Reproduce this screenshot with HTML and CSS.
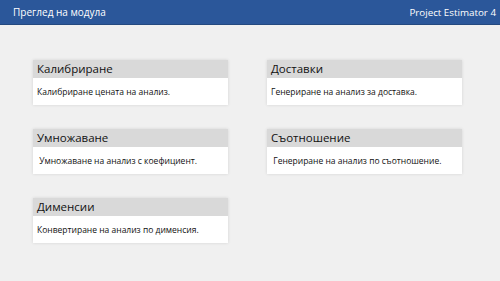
FILE: index.html
```html
<!DOCTYPE html>
<html lang="bg">
<head>
    <meta charset="UTF-8">
    <title>Преглед на модула</title>
    <link rel="stylesheet" href="styles.css">
</head>
<body>
    <div class="topbar">
        <span class="title">Преглед на модула</span>
        <span class="app">Project Estimator 4</span>
    </div>

    <div class="modules">
        <div class="module">
            <div class="module-head">Калибриране</div>
            <div class="module-body">Калибриране цената на анализ.</div>
        </div>
        <div class="module">
            <div class="module-head">Доставки</div>
            <div class="module-body">Генериране на анализ за доставка.</div>
        </div>
        <div class="module">
            <div class="module-head">Умножаване</div>
            <div class="module-body">&nbsp;Умножаване на анализ с коефициент.</div>
        </div>
        <div class="module">
            <div class="module-head">Съотношение</div>
            <div class="module-body">&nbsp;Генериране на анализ по съотношение.</div>
        </div>
        <div class="module">
            <div class="module-head">Дименсии</div>
            <div class="module-body">Конвертиране на анализ по дименсия.</div>
        </div>
    </div>
</body>
</html>
```

FILE: styles.css
```css
body {
    margin: 0;
    width: 500px;
    height: 281px;
    overflow: hidden;
    background-color: #f0f0f0;
    font-family: "Open Sans", "Noto Sans", sans-serif;
}

.topbar {
    height: 24px;
    background-color: #2b579a;
    border-bottom: 1px solid #24497f;
    color: #fff;
    display: flex;
    justify-content: space-between;
    align-items: center;
    padding: 0 4px 0 13px;
    font-size: 9.8px;
}

.title {
    font-size: 10px;
}

.modules {
    display: grid;
    grid-template-columns: 195px 195px;
    column-gap: 39px;
    row-gap: 24px;
    padding: 35px 0 0 33px;
}

.module {
    background-color: #fff;
    box-shadow: 0 0 3px rgba(0, 0, 0, 0.12);
}

.module-head {
    height: 18px;
    line-height: 18px;
    background-color: #d9d9d9;
    padding-left: 4px;
    font-size: 11.5px;
    color: #111;
}

.module-body {
    height: 27px;
    line-height: 27px;
    padding-left: 4px;
    font-size: 8.5px;
    color: #111;
}
```
